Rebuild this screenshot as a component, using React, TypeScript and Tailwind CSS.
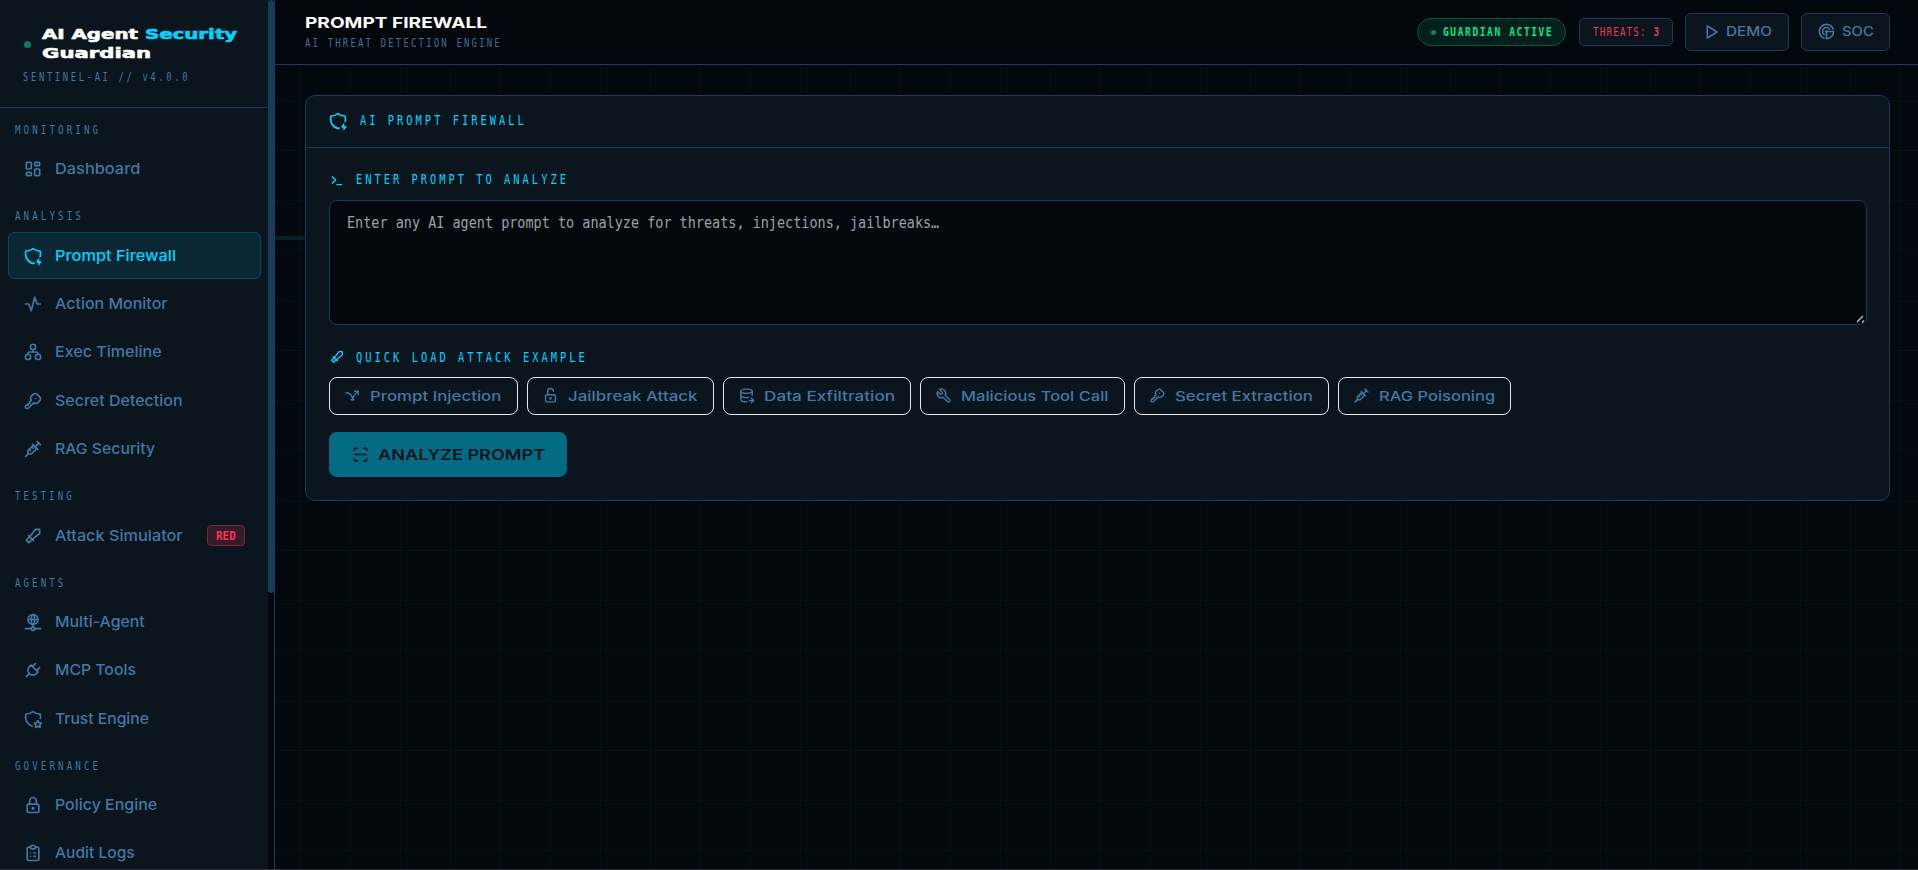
import type { ReactNode } from "react"
import { useLayoutEffect, useRef } from "react"
import {
  TbActivity,
  TbArrowBounce,
  TbClipboardList,
  TbDatabaseExport,
  TbKey,
  TbLayoutDashboard,
  TbLock,
  TbLockOpen,
  TbNetwork,
  TbPlayerPlay,
  TbPlug,
  TbRadar,
  TbScan,
  TbShieldBolt,
  TbShieldStar,
  TbSitemap,
  TbSword,
  TbTerminal,
  TbTool,
  TbVaccine,
} from "react-icons/tb"

const sections = [
  { title: "MONITORING", w: 86, items: [{ label: "Dashboard", w: 85, icon: TbLayoutDashboard }] },
  {
    title: "ANALYSIS",
    w: 69,
    items: [
      { label: "Prompt Firewall", w: 121, icon: TbShieldBolt, active: true },
      { label: "Action Monitor", w: 113, icon: TbActivity },
      { label: "Exec Timeline", w: 107, icon: TbSitemap },
      { label: "Secret Detection", w: 128, icon: TbKey },
      { label: "RAG Security", w: 100, icon: TbVaccine },
    ],
  },
  { title: "TESTING", w: 60, items: [{ label: "Attack Simulator", w: 128, icon: TbSword, tag: "RED" }] },
  {
    title: "AGENTS",
    w: 51,
    items: [
      { label: "Multi-Agent", w: 90, icon: TbNetwork },
      { label: "MCP Tools", w: 81, icon: TbPlug },
      { label: "Trust Engine", w: 94, icon: TbShieldStar },
    ],
  },
  {
    title: "GOVERNANCE",
    w: 86,
    items: [
      { label: "Policy Engine", w: 102, icon: TbLock },
      { label: "Audit Logs", w: 80, icon: TbClipboardList },
    ],
  },
]

const attacks = [
  { label: "Prompt Injection", w: 132, box: "w-[189px]", icon: TbArrowBounce },
  { label: "Jailbreak Attack", w: 130, box: "w-[187px]", icon: TbLockOpen },
  { label: "Data Exfiltration", w: 131, box: "w-[188px]", icon: TbDatabaseExport },
  { label: "Malicious Tool Call", w: 148, box: "w-[204.5px]", icon: TbTool },
  { label: "Secret Extraction", w: 138, box: "w-[195.5px]", icon: TbKey },
  { label: "RAG Poisoning", w: 116, box: "w-[173px]", icon: TbVaccine },
]

// Stretches a line of text to the given width
function Fit({ w, className = "", children }: { w: number; className?: string; children: ReactNode }) {
  const ref = useRef<HTMLSpanElement>(null)

  useLayoutEffect(() => {
    const el = ref.current
    if (el) el.style.transform = `scaleX(${w / el.offsetWidth})`
  }, [w])

  return (
    <span className={`block shrink-0 whitespace-nowrap ${className}`} style={{ width: w }}>
      <span ref={ref} className="inline-block origin-left align-top">
        {children}
      </span>
    </span>
  )
}

function Sidebar() {
  return (
    <aside className="flex w-[275px] shrink-0 border-r border-[#1a3a5c] bg-[#0a151e]">
      <div className="flex-1 overflow-hidden">
        <div className="h-[108px] border-b border-[#1a3a5c] pt-[25px] pl-[23px]">
          <div className="flex items-center">
            <span className="ml-px h-[7px] w-[7px] rounded-full bg-[#08805a]" />
            <div className="ml-[11px] font-['DejaVu_Sans'] text-[14px] leading-[19px] font-bold text-white [-webkit-text-stroke:0.6px]">
              <Fit w={195}>
                AI Agent <span className="text-[#00d4ff]">Security</span>
              </Fit>
              <Fit w={109}>Guardian</Fit>
            </div>
          </div>
          <Fit w={167} className="mt-1 font-['DejaVu_Sans_Mono'] text-[12px] leading-[20px] tracking-[3.5px] text-[#4478a3]">
            SENTINEL-AI // v4.0.0
          </Fit>
        </div>

        <nav>
          {sections.map((s) => (
            <div key={s.title}>
              <div className="h-[38px] pt-[12px] pl-[15px]">
                <Fit w={s.w} className="font-['DejaVu_Sans_Mono'] text-[12px] leading-[20px] tracking-[4px] text-[#4478a3]">
                  {s.title}
                </Fit>
              </div>
              {s.items.map((item) => {
                const Icon = item.icon
                return (
                  <div
                    key={item.label}
                    className={`mr-[7px] mb-[2px] ml-2 flex h-[46.4px] items-center rounded-md border pl-[14px] ${
                      "active" in item
                        ? "border-[#08495a] bg-[#0a2733] text-[#00d4ff]"
                        : "border-transparent text-[#4478a3]"
                    }`}
                  >
                    <Icon className="h-[20px] w-[20px] shrink-0" />
                    <Fit w={item.w} className="ml-[12px] font-[Inter] text-[15px] leading-5 font-medium">
                      {item.label}
                    </Fit>
                    {"tag" in item && (
                      <span className="ml-auto mr-[15px] flex h-[21px] w-[38px] items-center justify-center rounded-[4px] border border-[#7c263c] bg-[#341b29] font-['DejaVu_Sans_Mono'] text-[12px] font-bold text-[#ff3355]">
                        <Fit w={20}>{item.tag}</Fit>
                      </span>
                    )}
                  </div>
                )
              })}
            </div>
          ))}
        </nav>
      </div>

      {/* Scrollbar */}
      <div className="w-[6px] bg-[#03080c]">
        <div className="h-[593px] rounded-[3px] bg-[#1a3a5c]" />
      </div>
    </aside>
  )
}

function Header() {
  return (
    <header className="relative flex h-[65px] shrink-0 items-center border-b border-[#1a3a5c] bg-[#03080c] pr-7 pl-[30px]">
      <div className="flex-1 pt-[2px]">
        <Fit w={182} className="font-[Inter] text-[15px] leading-[20px] font-bold text-white">
          PROMPT FIREWALL
        </Fit>
        <Fit w={197} className="font-['DejaVu_Sans_Mono'] text-[12px] leading-[20px] tracking-[3px] text-[#42709b]">
          AI THREAT DETECTION ENGINE
        </Fit>
      </div>

      <div className="flex items-center gap-3 font-['DejaVu_Sans_Mono'] text-[12px]">
        <div className="flex h-7 w-[149px] items-center rounded-full border border-[#07573f] bg-[#03201c] pl-[13px] font-bold text-[#00e88a]">
          <span className="h-[5px] w-[5px] rounded-full bg-[#078a5a]" />
          <Fit w={110} className="ml-[7px] tracking-[2px]">GUARDIAN ACTIVE</Fit>
        </div>
        <div className="ml-px flex h-7 w-[94px] items-center rounded-[5px] border border-[#1a3a5c] bg-[#0a151e] pl-[13px] text-[#f03656]">
          <Fit w={67} className="tracking-[1.5px]">
            THREATS: <b>3</b>
          </Fit>
        </div>
        <div className="flex h-[38px] w-[104px] items-center rounded-md border border-[#1a3a5c] bg-[#0a151e] pl-[16px] text-[#4478a3]">
          <TbPlayerPlay className="-mt-px h-[18px] w-[18px]" />
          <Fit w={46} className="ml-[6px] font-[Inter] text-[13px] font-medium">DEMO</Fit>
        </div>
        <div className="flex h-[38px] w-[89px] items-center rounded-md border border-[#1a3a5c] bg-[#0a151e] pl-[15px] text-[#4478a3]">
          <TbRadar className="-mt-px h-[19px] w-[19px]" />
          <Fit w={32} className="ml-[6px] font-[Inter] text-[13px] font-medium">SOC</Fit>
        </div>
      </div>
    </header>
  )
}

function FirewallCard() {
  return (
    <div className="relative h-[406px] rounded-[10px] border border-[#1a3a5c] bg-[#0a151e]">
      <div className="flex h-[52px] items-center border-b border-[#1a3a5c] pl-[22px] text-[#00d4ff]">
        <TbShieldBolt className="-mt-px h-[20px] w-[20px]" />
        <Fit w={167} className="-mt-[3px] ml-[12px] font-['DejaVu_Sans_Mono'] text-[14px] leading-5 tracking-[4px]">AI PROMPT FIREWALL</Fit>
      </div>

      <div className="px-[23px] pt-[21px]">
        <div className="flex h-[20px] items-center text-[#00d4ff]">
          <TbTerminal className="mt-[2px] h-[16px] w-[16px]" />
          <Fit w={213} className="ml-[11px] font-['DejaVu_Sans_Mono'] text-[14px] tracking-[4px]">ENTER PROMPT TO ANALYZE</Fit>
        </div>

        <div className="relative mt-[11px] -mr-px h-[125px] rounded-lg border border-[#1a3a5c] bg-[#03080c] pt-[11px] pl-[17px]">
          <Fit w={592} className="font-['DejaVu_Sans_Mono'] text-[15px] leading-[22px] text-[#9aa2a8]">
            Enter any AI agent prompt to analyze for threats, injections, jailbreaks…
          </Fit>
          <svg className="absolute right-[2px] bottom-[1px]" width="8" height="8" stroke="#b5b5b5" strokeWidth="1.5">
            <path d="M1 7 7 1M6 7.5 8 5.5" />
          </svg>
        </div>

        <div className="mt-[22px] flex h-[20px] items-center text-[#00d4ff]">
          <TbSword className="h-[16px] w-[16px]" />
          <Fit w={232} className="ml-[11px] font-['DejaVu_Sans_Mono'] text-[14px] tracking-[4px]">QUICK LOAD ATTACK EXAMPLE</Fit>
        </div>

        <div className="mt-[10px] flex gap-[9px]">
          {attacks.map((a) => {
            const Icon = a.icon
            return (
              <div key={a.label} className={`flex h-[38px] items-center rounded-lg border border-[#e8eaec] pl-[14px] text-[#4478a3] ${a.box}`}>
                <Icon className="-mt-px h-[17px] w-[17px]" />
                <Fit w={a.w} className="-mt-px ml-[9px] font-[Inter] text-[13.5px] leading-5 font-medium">{a.label}</Fit>
              </div>
            )
          })}
        </div>

        <div className="mt-[17px] flex h-[45px] w-[238px] items-center rounded-lg bg-[#056a84] pl-[22px] text-[#03141c]">
          <TbScan className="-mt-px h-[19px] w-[19px]" />
          <Fit w={167} className="ml-[8px] font-[Inter] text-[14px] font-semibold">ANALYZE PROMPT</Fit>
        </div>
      </div>
    </div>
  )
}

export default function App() {
  return (
    <div className="relative flex h-[870px] w-full overflow-hidden bg-[#03080c] bg-[linear-gradient(#00d4ff0a_1px,transparent_1px),linear-gradient(90deg,#00d4ff0a_1px,transparent_1px)] bg-[size:50px_50px]">
      {/* Scan line, fades out to the right */}
      <div className="absolute top-[236px] left-0 h-1 w-full bg-linear-to-r from-[#04242e] to-transparent" />
      <div className="relative flex w-full">
        <Sidebar />
        <div className="flex flex-1 flex-col">
          <Header />
          <main className="flex-1 pt-[30px] pr-7 pl-[30px]">
            <FirewallCard />
          </main>
        </div>
      </div>
      <div className="absolute bottom-0 left-0 h-px w-full bg-[#2b3136]" />
    </div>
  )
}
